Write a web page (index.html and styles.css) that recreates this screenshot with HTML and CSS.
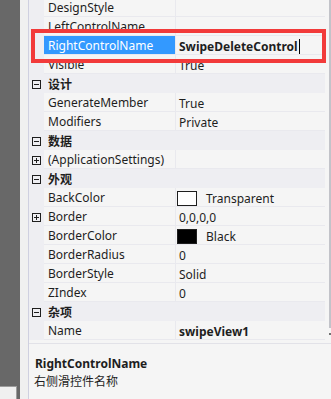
FILE: index.html
```html
<!DOCTYPE html>
<html lang="zh-CN">
<head>
    <meta charset="UTF-8">
    <title>Properties</title>
    <link rel="stylesheet" href="styles.css">
</head>
<body>
    <div class="window">
        <div class="dock">
            <div class="dock-tab"></div>
        </div>
        <div class="edge"></div>

        <div class="panel">
            <div class="grid-area">
                <div class="grid">
                    <div class="row">
                        <div class="gutter"></div>
                        <div class="name">DesignStyle</div>
                        <div class="value"></div>
                    </div>
                    <div class="row">
                        <div class="gutter"></div>
                        <div class="name">LeftControlName</div>
                        <div class="value"></div>
                    </div>
                    <div class="row selected">
                        <div class="gutter"></div>
                        <div class="name">RightControlName</div>
                        <div class="value bold">SwipeDeleteControl<span class="caret"></span></div>
                    </div>
                    <div class="row">
                        <div class="gutter"></div>
                        <div class="name">Visible</div>
                        <div class="value">True</div>
                    </div>

                    <div class="category">
                        <div class="gutter">
                            <svg width="9" height="9" viewBox="0 0 9 9"><rect x="0.5" y="0.5" width="8" height="8" fill="none" stroke="#1e1e1e"/><path d="M2 4.5h5" stroke="#1e1e1e"/></svg>
                        </div>
                        <div class="cat-name">设计</div>
                    </div>
                    <div class="row">
                        <div class="gutter"></div>
                        <div class="name">GenerateMember</div>
                        <div class="value">True</div>
                    </div>
                    <div class="row">
                        <div class="gutter"></div>
                        <div class="name">Modifiers</div>
                        <div class="value">Private</div>
                    </div>

                    <div class="category">
                        <div class="gutter">
                            <svg width="9" height="9" viewBox="0 0 9 9"><rect x="0.5" y="0.5" width="8" height="8" fill="none" stroke="#1e1e1e"/><path d="M2 4.5h5" stroke="#1e1e1e"/></svg>
                        </div>
                        <div class="cat-name">数据</div>
                    </div>
                    <div class="row">
                        <div class="gutter">
                            <svg width="9" height="9" viewBox="0 0 9 9"><rect x="0.5" y="0.5" width="8" height="8" fill="none" stroke="#1e1e1e"/><path d="M2 4.5h5M4.5 2v5" stroke="#1e1e1e"/></svg>
                        </div>
                        <div class="name">(ApplicationSettings)</div>
                        <div class="value"></div>
                    </div>

                    <div class="category">
                        <div class="gutter">
                            <svg width="9" height="9" viewBox="0 0 9 9"><rect x="0.5" y="0.5" width="8" height="8" fill="none" stroke="#1e1e1e"/><path d="M2 4.5h5" stroke="#1e1e1e"/></svg>
                        </div>
                        <div class="cat-name">外观</div>
                    </div>
                    <div class="row">
                        <div class="gutter"></div>
                        <div class="name">BackColor</div>
                        <div class="value"><span class="swatch white"></span>Transparent</div>
                    </div>
                    <div class="row">
                        <div class="gutter">
                            <svg width="9" height="9" viewBox="0 0 9 9"><rect x="0.5" y="0.5" width="8" height="8" fill="none" stroke="#1e1e1e"/><path d="M2 4.5h5M4.5 2v5" stroke="#1e1e1e"/></svg>
                        </div>
                        <div class="name">Border</div>
                        <div class="value">0,0,0,0</div>
                    </div>
                    <div class="row">
                        <div class="gutter"></div>
                        <div class="name">BorderColor</div>
                        <div class="value"><span class="swatch black"></span>Black</div>
                    </div>
                    <div class="row">
                        <div class="gutter"></div>
                        <div class="name">BorderRadius</div>
                        <div class="value">0</div>
                    </div>
                    <div class="row">
                        <div class="gutter"></div>
                        <div class="name">BorderStyle</div>
                        <div class="value">Solid</div>
                    </div>
                    <div class="row">
                        <div class="gutter"></div>
                        <div class="name">ZIndex</div>
                        <div class="value">0</div>
                    </div>

                    <div class="category">
                        <div class="gutter">
                            <svg width="9" height="9" viewBox="0 0 9 9"><rect x="0.5" y="0.5" width="8" height="8" fill="none" stroke="#1e1e1e"/><path d="M2 4.5h5" stroke="#1e1e1e"/></svg>
                        </div>
                        <div class="cat-name">杂项</div>
                    </div>
                    <div class="row">
                        <div class="gutter"></div>
                        <div class="name">Name</div>
                        <div class="value bold">swipeView1</div>
                    </div>
                </div>

                <div class="scroll">
                    <div class="thumb"></div>
                    <div class="arrow"></div>
                </div>
            </div>

            <div class="desc">
                <div class="desc-title">RightControlName</div>
                <div class="desc-text">右侧滑控件名称</div>
            </div>
        </div>

        <!-- red annotation box -->
        <div class="callout"></div>
    </div>
</body>
</html>
```

FILE: styles.css
```css
body {
    margin: 0;
    padding: 0;
    font-family: "Noto Sans", "Noto Sans CJK SC", sans-serif;
    font-size: 12px;
    color: #1e1e1e;
    background-color: #f5f5f5;
    overflow: hidden;
}

.window {
    position: relative;
    display: flex;
    width: 331px;
    height: 399px;
    overflow: hidden;
}

/* left dock strip */
.dock {
    width: 20px;
    background-color: #686868;
    display: flex;
    flex-direction: column;
    justify-content: flex-end;
}

.dock-tab {
    width: 16px;
    height: 12px;
    background-color: #f0f0f0;
    border-top: 1px solid #9c9c9c;
    border-right: 1px solid #9c9c9c;
}

.edge {
    width: 8px;
    background-color: #f0f0f0;
    border-right: 1px solid #cfd0e0;
}

.panel {
    flex: 1;
    display: flex;
    flex-direction: column;
    background-color: #f5f5f5;
}

.grid-area {
    display: flex;
    height: 343px;
    border-bottom: 1px solid #e2e2e8;
}

.grid {
    width: 296px;
    margin-top: -2px;
}

.row,
.category {
    display: flex;
    height: 19px;
}

.gutter {
    width: 15px;
    flex: none;
    display: flex;
    align-items: center;
    padding-left: 3px;
    padding-top: 1px;
    box-sizing: border-box;
    background-color: #eeeef2;
}

.name {
    width: 132px;
    height: 19px;
    flex: none;
    box-sizing: border-box;
    padding-left: 4px;
    line-height: 20px;
    border-bottom: 1px solid #e9e9ee;
    border-right: 1px solid #e9e9ee;
    white-space: nowrap;
    overflow: hidden;
}

.value {
    flex: 1;
    display: flex;
    align-items: center;
    box-sizing: border-box;
    padding: 2px 0 0 3px;
    height: 19px;
    border-bottom: 1px solid #e9e9ee;
    white-space: nowrap;
}

.bold {
    font-weight: bold;
}

.selected .name {
    background-color: #3399ff;
    color: #fff;
}

.caret {
    display: inline-block;
    width: 1px;
    height: 15px;
    margin-left: 1px;
    background-color: #000;
}

.category {
    background-color: #eeeef2;
}

.cat-name {
    padding-left: 4px;
    line-height: 21px;
    font-weight: bold;
}

.swatch {
    display: inline-block;
    width: 20px;
    height: 15px;
    box-sizing: border-box;
    margin-left: -2px;
    margin-right: 9px;
    border: 1px solid #1e1e1e;
}

.swatch.white {
    background-color: #fff;
}

.swatch.black {
    background-color: #000;
}

.scroll {
    margin-left: 4px;
    width: 2px;
}

.thumb {
    height: 328px;
    background-color: #c2c3c9;
}

.arrow {
    margin-top: 5px;
    height: 2px;
    background-color: #717171;
}

/* description pane */
.desc {
    padding: 11px 0 0 6px;
    line-height: 18px;
}

.desc-title {
    font-weight: bold;
}

.desc-text {
    margin-left: -1px;
}

.callout {
    position: absolute;
    left: 31px;
    top: 29px;
    width: 295px;
    height: 34px;
    box-sizing: border-box;
    border: 4px solid #f23a3a;
}
```
